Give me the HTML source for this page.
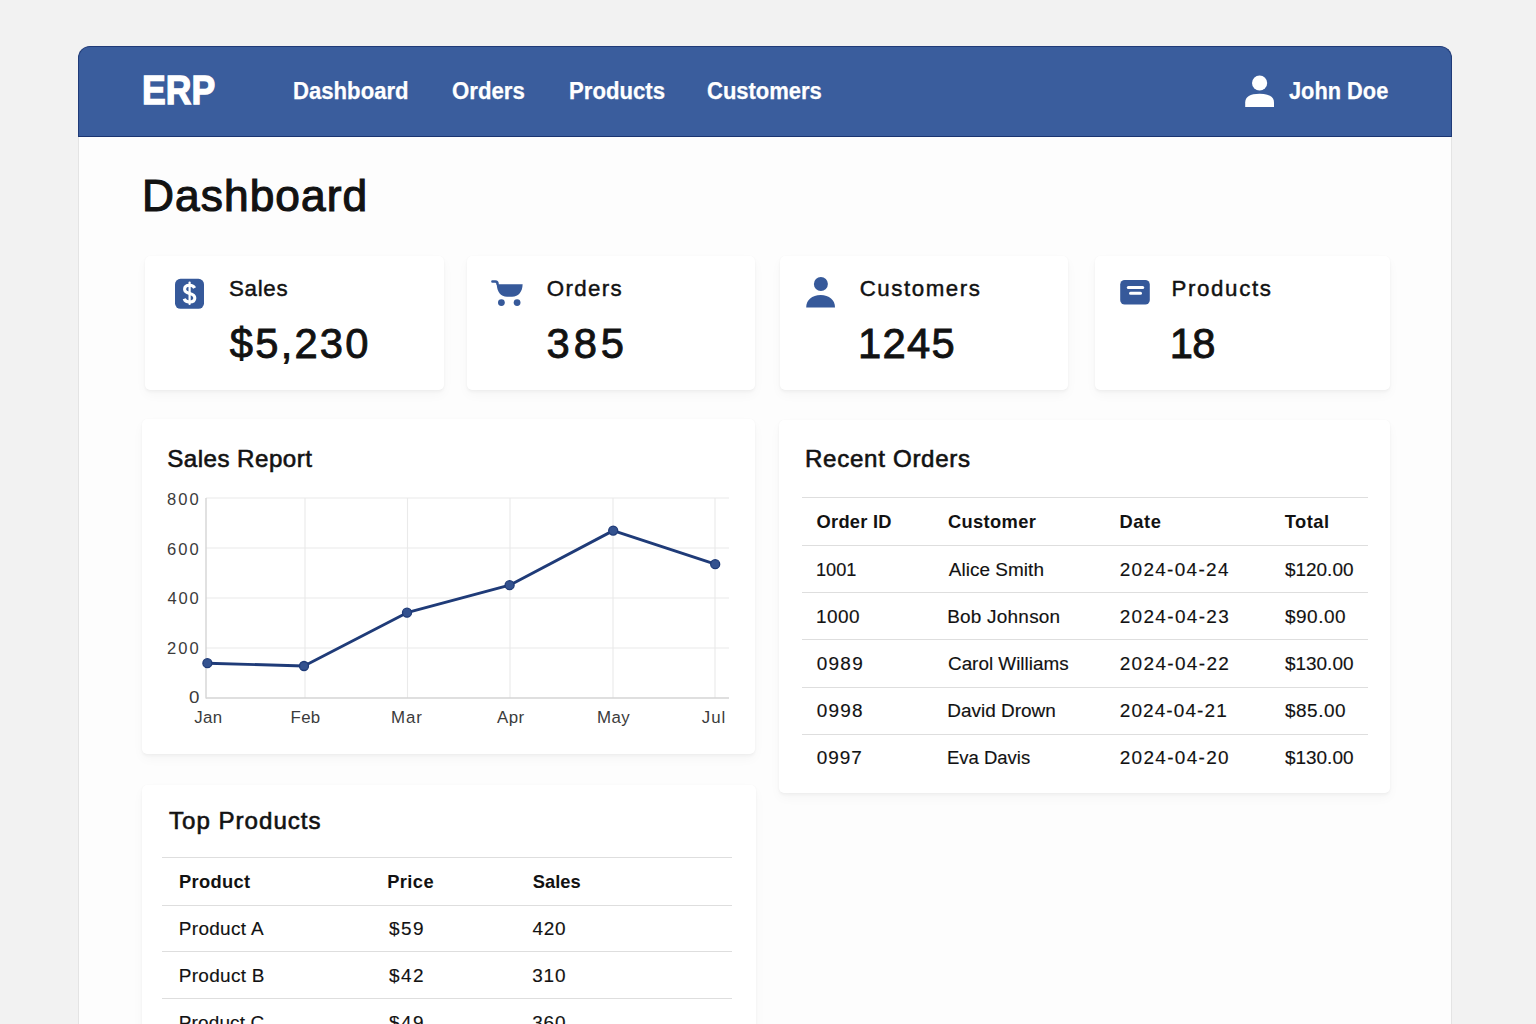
<!DOCTYPE html>
<html><head><meta charset="utf-8"><title>ERP Dashboard</title>
<style>
html,body{margin:0;padding:0;}
body{width:1536px;height:1024px;overflow:hidden;background:#f2f2f2;position:relative;font-family:"Liberation Sans",sans-serif;}
.t{position:absolute;line-height:1;white-space:nowrap;transform-origin:0 0;}
.panel{position:absolute;left:78px;top:46px;width:1374px;height:1000px;background:#fdfdfd;border-radius:12px 12px 0 0;border-left:1px solid #e4e4e4;border-right:1px solid #e4e4e4;box-sizing:border-box;}
.hdr{position:absolute;left:78px;top:46px;width:1374px;height:91px;background:#3a5d9d;border-radius:12px 12px 0 0;border:1px solid #203b78;border-bottom:1.5px solid #1a3470;box-sizing:border-box;}
.card{position:absolute;background:#fff;border-radius:5px;box-shadow:0 2px 3px rgba(0,0,0,0.035),0 5px 12px rgba(0,0,0,0.03),0 0 1.5px rgba(0,0,0,0.04);}
.hl{position:absolute;height:1px;background:#dedede;}
svg{position:absolute;overflow:visible;}
</style></head><body>
<div class="panel"></div>
<div class="hdr"></div>
<div class="t" style="left:142.30px;top:71.07px;font-size:40.26px;font-weight:700;color:#ffffff;transform:scaleX(0.8842);-webkit-text-stroke:1.3px #ffffff;">ERP</div>
<div class="t" style="left:293.06px;top:80.05px;font-size:23.18px;font-weight:700;color:#ffffff;transform:scaleX(0.9551);-webkit-text-stroke:0.25px #ffffff;">Dashboard</div>
<div class="t" style="left:451.54px;top:80.05px;font-size:23.18px;font-weight:700;color:#ffffff;transform:scaleX(0.9591);-webkit-text-stroke:0.25px #ffffff;">Orders</div>
<div class="t" style="left:568.66px;top:80.05px;font-size:23.18px;font-weight:700;color:#ffffff;transform:scaleX(0.9565);-webkit-text-stroke:0.25px #ffffff;">Products</div>
<div class="t" style="left:706.85px;top:80.05px;font-size:23.18px;font-weight:700;color:#ffffff;transform:scaleX(0.9488);-webkit-text-stroke:0.25px #ffffff;">Customers</div>
<div class="t" style="left:1288.98px;top:80.05px;font-size:23.18px;font-weight:700;color:#ffffff;transform:scaleX(0.9405);-webkit-text-stroke:0.25px #ffffff;">John Doe</div>
<svg style="left:0;top:0" width="1536" height="1024" viewBox="0 0 1536 1024">
<circle cx="1259.6" cy="83" r="7.6" fill="#fff"/>
<path d="M1245.2 107 V102.5 C1245.2 97 1250 93.8 1259.6 93.8 C1269.2 93.8 1274 97 1274 102.5 V107 Z" fill="#fff"/>
</svg>
<div class="t" style="left:141.95px;top:174.36px;font-size:44.26px;font-weight:400;color:#121212;letter-spacing:1.100px;-webkit-text-stroke:1.15px #121212;">Dashboard</div>
<div class="card" style="left:144.5px;top:256px;width:299.5px;height:134px"></div>
<div class="card" style="left:466.5px;top:256px;width:288.5px;height:134px"></div>
<div class="card" style="left:779.5px;top:256px;width:288.5px;height:134px"></div>
<div class="card" style="left:1094.5px;top:256px;width:295.5px;height:134px"></div>
<svg style="left:0;top:0" width="1536" height="1024" viewBox="0 0 1536 1024">
<rect x="175" y="278.8" width="29" height="30" rx="5.5" fill="#36599a"/>
<path d="M189.6 282.6 V304" stroke="#fff" stroke-width="2.2" stroke-linecap="round"/>
<path d="M194.6 288 C193.8 286.2 192 285.3 189.6 285.3 C186.4 285.3 184.6 287 184.6 289.3 C184.6 292 187 292.8 189.6 293.4 C192.4 294 194.8 295 194.8 298 C194.8 300.4 192.8 302 189.6 302 C186.8 302 184.8 300.8 184.2 298.8" fill="none" stroke="#fff" stroke-width="3.1" stroke-linecap="butt"/>
<path d="M492.4 281.4 H495.4 C497 281.4 497.6 282.6 497.6 284.2" fill="none" stroke="#36599a" stroke-width="2.5" stroke-linecap="round"/>
<path d="M496.8 284.3 H522.6 C522.6 291.5 518.6 296.8 512 296.8 H507 C500.6 296.8 496.8 291.5 496.8 284.3 Z" fill="#36599a"/>
<circle cx="501.4" cy="302.6" r="3.4" fill="#36599a"/>
<circle cx="517.1" cy="302.6" r="3.4" fill="#36599a"/>
<circle cx="820.9" cy="284" r="7" fill="#36599a"/>
<path d="M806.2 307.6 C806.2 300 812 295.1 820.6 295.1 C829.2 295.1 835 300 835 307.6 Z" fill="#36599a"/>
<rect x="1120.2" y="280" width="29.6" height="24.6" rx="4.5" fill="#36599a"/>
<path d="M1128.3 287.4 H1142.7" stroke="#fff" stroke-width="3" stroke-linecap="round"/>
<path d="M1130.5 293.2 H1140.5" stroke="#fff" stroke-width="3" stroke-linecap="round"/>
</svg>
<div class="t" style="left:229.00px;top:278.19px;font-size:22.31px;font-weight:400;color:#121212;letter-spacing:0.689px;-webkit-text-stroke:0.45px #121212;">Sales</div>
<div class="t" style="left:546.85px;top:278.39px;font-size:22.31px;font-weight:400;color:#121212;letter-spacing:1.348px;-webkit-text-stroke:0.45px #121212;">Orders</div>
<div class="t" style="left:859.71px;top:278.19px;font-size:22.31px;font-weight:400;color:#121212;letter-spacing:1.552px;-webkit-text-stroke:0.45px #121212;">Customers</div>
<div class="t" style="left:1171.40px;top:278.19px;font-size:22.31px;font-weight:400;color:#121212;letter-spacing:1.649px;-webkit-text-stroke:0.45px #121212;">Products</div>
<div class="t" style="left:229.83px;top:322.94px;font-size:41.72px;font-weight:400;color:#121212;letter-spacing:2.207px;-webkit-text-stroke:0.9px #121212;">$5,230</div>
<div class="t" style="left:546.56px;top:322.94px;font-size:41.72px;font-weight:400;color:#121212;letter-spacing:3.928px;-webkit-text-stroke:0.9px #121212;">385</div>
<div class="t" style="left:857.88px;top:322.94px;font-size:41.72px;font-weight:400;color:#121212;letter-spacing:1.316px;-webkit-text-stroke:0.9px #121212;">1245</div>
<div class="t" style="left:1169.78px;top:322.94px;font-size:41.72px;font-weight:400;color:#121212;letter-spacing:-0.781px;-webkit-text-stroke:0.9px #121212;">18</div>
<div class="card" style="left:142px;top:419px;width:613px;height:334.5px"></div>
<div class="t" style="left:167.19px;top:446.88px;font-size:24.13px;font-weight:400;color:#121212;letter-spacing:0.477px;-webkit-text-stroke:0.6px #121212;">Sales Report</div>
<svg style="left:0;top:0" width="1536" height="1024" viewBox="0 0 1536 1024">
<line x1="206" y1="498" x2="729" y2="498" stroke="#eaeaea" stroke-width="1.1"/>
<line x1="206" y1="548" x2="729" y2="548" stroke="#eaeaea" stroke-width="1.1"/>
<line x1="206" y1="598" x2="729" y2="598" stroke="#eaeaea" stroke-width="1.1"/>
<line x1="206" y1="648" x2="729" y2="648" stroke="#eaeaea" stroke-width="1.1"/>
<line x1="305" y1="498" x2="305" y2="698" stroke="#eaeaea" stroke-width="1.1"/>
<line x1="407.5" y1="498" x2="407.5" y2="698" stroke="#eaeaea" stroke-width="1.1"/>
<line x1="510" y1="498" x2="510" y2="698" stroke="#eaeaea" stroke-width="1.1"/>
<line x1="613" y1="498" x2="613" y2="698" stroke="#eaeaea" stroke-width="1.1"/>
<line x1="715" y1="498" x2="715" y2="698" stroke="#eaeaea" stroke-width="1.1"/>
<line x1="206" y1="498" x2="206" y2="698.5" stroke="#d4d4d4" stroke-width="1.4"/>
<line x1="206" y1="698" x2="729" y2="698" stroke="#d4d4d4" stroke-width="1.4"/>
<path d="M207.4 663.2 L304 666 L407 612.7 L509.6 585.2 L613.2 530.6 L715.2 564.2" fill="none" stroke="#1f3b78" stroke-width="2.9" stroke-linejoin="round"/>
<circle cx="207.4" cy="663.2" r="4.5" fill="#34528f" stroke="#1f3b78" stroke-width="1.3"/>
<circle cx="304" cy="666" r="4.5" fill="#34528f" stroke="#1f3b78" stroke-width="1.3"/>
<circle cx="407" cy="612.7" r="4.5" fill="#34528f" stroke="#1f3b78" stroke-width="1.3"/>
<circle cx="509.6" cy="585.2" r="4.5" fill="#34528f" stroke="#1f3b78" stroke-width="1.3"/>
<circle cx="613.2" cy="530.6" r="4.5" fill="#34528f" stroke="#1f3b78" stroke-width="1.3"/>
<circle cx="715.2" cy="564.2" r="4.5" fill="#34528f" stroke="#1f3b78" stroke-width="1.3"/>
</svg>
<div class="t" style="left:167.07px;top:492.37px;font-size:16.57px;font-weight:400;color:#3b3b3b;letter-spacing:2.060px;">800</div>
<div class="t" style="left:166.97px;top:542.17px;font-size:16.57px;font-weight:400;color:#3b3b3b;letter-spacing:2.110px;">600</div>
<div class="t" style="left:167.44px;top:591.37px;font-size:16.57px;font-weight:400;color:#3b3b3b;letter-spacing:1.878px;">400</div>
<div class="t" style="left:166.97px;top:641.37px;font-size:16.57px;font-weight:400;color:#3b3b3b;letter-spacing:2.110px;">200</div>
<div class="t" style="left:188.59px;top:690.37px;font-size:16.57px;font-weight:400;color:#3b3b3b;transform:scaleX(1.1316);">0</div>
<div class="t" style="left:194.13px;top:709.73px;font-size:16.86px;font-weight:400;color:#3b3b3b;letter-spacing:0.385px;">Jan</div>
<div class="t" style="left:290.62px;top:709.73px;font-size:16.86px;font-weight:400;color:#3b3b3b;letter-spacing:0.262px;">Feb</div>
<div class="t" style="left:391.02px;top:709.73px;font-size:16.86px;font-weight:400;color:#3b3b3b;letter-spacing:0.909px;">Mar</div>
<div class="t" style="left:496.97px;top:709.73px;font-size:16.86px;font-weight:400;color:#3b3b3b;letter-spacing:0.434px;">Apr</div>
<div class="t" style="left:597.02px;top:709.73px;font-size:16.86px;font-weight:400;color:#3b3b3b;letter-spacing:0.375px;">May</div>
<div class="t" style="left:701.73px;top:709.73px;font-size:16.86px;font-weight:400;color:#3b3b3b;letter-spacing:1.017px;">Jul</div>
<div class="card" style="left:779px;top:419.6px;width:611px;height:373.4px"></div>
<div class="t" style="left:804.92px;top:446.98px;font-size:24.13px;font-weight:400;color:#121212;letter-spacing:0.697px;-webkit-text-stroke:0.6px #121212;">Recent Orders</div>
<div class="hl" style="left:802px;top:497px;width:566px"></div>
<div class="hl" style="left:802px;top:545px;width:566px"></div>
<div class="hl" style="left:802px;top:592px;width:566px"></div>
<div class="hl" style="left:802px;top:639px;width:566px"></div>
<div class="hl" style="left:802px;top:687px;width:566px"></div>
<div class="hl" style="left:802px;top:734px;width:566px"></div>
<div class="t" style="left:816.57px;top:512.90px;font-size:18.31px;font-weight:700;color:#121212;letter-spacing:0.235px;">Order ID</div>
<div class="t" style="left:947.97px;top:512.90px;font-size:18.31px;font-weight:700;color:#121212;letter-spacing:0.348px;">Customer</div>
<div class="t" style="left:1119.39px;top:512.90px;font-size:18.31px;font-weight:700;color:#121212;letter-spacing:0.609px;">Date</div>
<div class="t" style="left:1284.78px;top:512.90px;font-size:18.31px;font-weight:700;color:#121212;letter-spacing:0.481px;">Total</div>
<div class="t" style="left:815.99px;top:561.07px;font-size:18.97px;font-weight:400;color:#121212;transform:scaleX(0.9578);-webkit-text-stroke:0.15px #121212;">1001</div>
<div class="t" style="left:948.74px;top:561.07px;font-size:18.97px;font-weight:400;color:#121212;letter-spacing:0.042px;-webkit-text-stroke:0.15px #121212;">Alice Smith</div>
<div class="t" style="left:1119.73px;top:561.07px;font-size:18.97px;font-weight:400;color:#121212;letter-spacing:1.310px;-webkit-text-stroke:0.15px #121212;">2024-04-24</div>
<div class="t" style="left:1284.89px;top:561.07px;font-size:18.97px;font-weight:400;color:#121212;letter-spacing:0.018px;-webkit-text-stroke:0.15px #121212;">$120.00</div>
<div class="t" style="left:815.93px;top:608.17px;font-size:18.97px;font-weight:400;color:#121212;letter-spacing:0.509px;-webkit-text-stroke:0.15px #121212;">1000</div>
<div class="t" style="left:947.22px;top:608.17px;font-size:18.97px;font-weight:400;color:#121212;letter-spacing:0.228px;-webkit-text-stroke:0.15px #121212;">Bob Johnson</div>
<div class="t" style="left:1119.73px;top:608.17px;font-size:18.97px;font-weight:400;color:#121212;letter-spacing:1.344px;-webkit-text-stroke:0.15px #121212;">2024-04-23</div>
<div class="t" style="left:1284.89px;top:608.17px;font-size:18.97px;font-weight:400;color:#121212;letter-spacing:0.551px;-webkit-text-stroke:0.15px #121212;">$90.00</div>
<div class="t" style="left:816.65px;top:655.27px;font-size:18.97px;font-weight:400;color:#121212;letter-spacing:1.299px;-webkit-text-stroke:0.15px #121212;">0989</div>
<div class="t" style="left:947.83px;top:655.27px;font-size:18.97px;font-weight:400;color:#121212;transform:scaleX(0.9956);-webkit-text-stroke:0.15px #121212;">Carol Williams</div>
<div class="t" style="left:1119.73px;top:655.27px;font-size:18.97px;font-weight:400;color:#121212;letter-spacing:1.356px;-webkit-text-stroke:0.15px #121212;">2024-04-22</div>
<div class="t" style="left:1284.89px;top:655.27px;font-size:18.97px;font-weight:400;color:#121212;letter-spacing:0.018px;-webkit-text-stroke:0.15px #121212;">$130.00</div>
<div class="t" style="left:816.65px;top:702.37px;font-size:18.97px;font-weight:400;color:#121212;letter-spacing:1.273px;-webkit-text-stroke:0.15px #121212;">0998</div>
<div class="t" style="left:947.22px;top:702.37px;font-size:18.97px;font-weight:400;color:#121212;-webkit-text-stroke:0.15px #121212;">David Drown</div>
<div class="t" style="left:1119.73px;top:702.37px;font-size:18.97px;font-weight:400;color:#121212;letter-spacing:1.119px;-webkit-text-stroke:0.15px #121212;">2024-04-21</div>
<div class="t" style="left:1284.89px;top:702.37px;font-size:18.97px;font-weight:400;color:#121212;letter-spacing:0.551px;-webkit-text-stroke:0.15px #121212;">$85.00</div>
<div class="t" style="left:816.65px;top:749.47px;font-size:18.97px;font-weight:400;color:#121212;letter-spacing:1.028px;-webkit-text-stroke:0.15px #121212;">0997</div>
<div class="t" style="left:947.26px;top:749.47px;font-size:18.97px;font-weight:400;color:#121212;transform:scaleX(0.9753);-webkit-text-stroke:0.15px #121212;">Eva Davis</div>
<div class="t" style="left:1119.73px;top:749.47px;font-size:18.97px;font-weight:400;color:#121212;letter-spacing:1.331px;-webkit-text-stroke:0.15px #121212;">2024-04-20</div>
<div class="t" style="left:1284.89px;top:749.47px;font-size:18.97px;font-weight:400;color:#121212;letter-spacing:0.018px;-webkit-text-stroke:0.15px #121212;">$130.00</div>
<div class="card" style="left:142px;top:784.5px;width:614px;height:300px"></div>
<div class="t" style="left:168.97px;top:808.58px;font-size:24.13px;font-weight:400;color:#121212;letter-spacing:0.981px;-webkit-text-stroke:0.6px #121212;">Top Products</div>
<div class="hl" style="left:162px;top:857px;width:570px"></div>
<div class="hl" style="left:162px;top:905px;width:570px"></div>
<div class="hl" style="left:162px;top:951px;width:570px"></div>
<div class="hl" style="left:162px;top:998px;width:570px"></div>
<div class="t" style="left:179.09px;top:873.10px;font-size:18.31px;font-weight:700;color:#121212;letter-spacing:0.323px;">Product</div>
<div class="t" style="left:387.19px;top:873.10px;font-size:18.31px;font-weight:700;color:#121212;letter-spacing:0.409px;">Price</div>
<div class="t" style="left:532.75px;top:873.10px;font-size:18.31px;font-weight:700;color:#121212;letter-spacing:0.027px;">Sales</div>
<div class="t" style="left:178.82px;top:919.87px;font-size:18.97px;font-weight:400;color:#121212;letter-spacing:0.317px;-webkit-text-stroke:0.15px #121212;">Product A</div>
<div class="t" style="left:389.09px;top:919.87px;font-size:18.97px;font-weight:400;color:#121212;letter-spacing:1.406px;-webkit-text-stroke:0.15px #121212;">$59</div>
<div class="t" style="left:532.46px;top:919.87px;font-size:18.97px;font-weight:400;color:#121212;letter-spacing:0.775px;-webkit-text-stroke:0.15px #121212;">420</div>
<div class="t" style="left:178.82px;top:966.87px;font-size:18.97px;font-weight:400;color:#121212;letter-spacing:0.303px;-webkit-text-stroke:0.15px #121212;">Product B</div>
<div class="t" style="left:389.09px;top:966.87px;font-size:18.97px;font-weight:400;color:#121212;letter-spacing:1.425px;-webkit-text-stroke:0.15px #121212;">$42</div>
<div class="t" style="left:532.15px;top:966.87px;font-size:18.97px;font-weight:400;color:#121212;letter-spacing:0.926px;-webkit-text-stroke:0.15px #121212;">310</div>
<div class="t" style="left:178.82px;top:1013.87px;font-size:18.97px;font-weight:400;color:#121212;letter-spacing:0.137px;-webkit-text-stroke:0.15px #121212;">Product C</div>
<div class="t" style="left:389.09px;top:1013.87px;font-size:18.97px;font-weight:400;color:#121212;letter-spacing:1.406px;-webkit-text-stroke:0.15px #121212;">$49</div>
<div class="t" style="left:532.15px;top:1013.87px;font-size:18.97px;font-weight:400;color:#121212;letter-spacing:0.926px;-webkit-text-stroke:0.15px #121212;">360</div>
</body></html>
